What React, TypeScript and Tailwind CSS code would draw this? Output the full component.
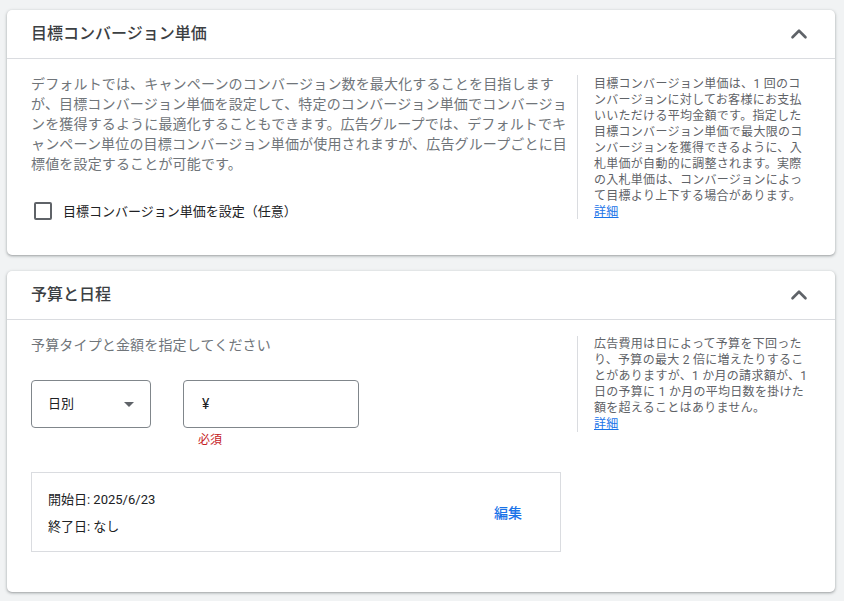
import { ChevronUp } from 'lucide-react'
import type { ReactNode } from 'react'

const font = 'font-[Roboto,"Noto_Sans_CJK_JP",sans-serif]'

function Card({ title, className, children }: { title: string; className: string; children: ReactNode }) {
  return (
    <section className={`bg-white rounded-[5px] shadow-[0_1px_2px_rgba(60,64,67,0.3),0_1px_3px_1px_rgba(60,64,67,0.15)] ${className}`}>
      <header className="h-[49px] pl-6 pr-[23px] flex items-center justify-between border-b border-[#dadce0]">
        <h2 className="text-[16px] leading-6 font-medium text-[#3c4043]">{title}</h2>
        <ChevronUp size={26} strokeWidth={2.4} className="text-[#5f6368]" aria-hidden="true" />
      </header>
      {children}
    </section>
  )
}

function SideNote({ text, className }: { text: string; className: string }) {
  return (
    <aside className={`border-l border-[#dadce0] pl-4 w-[233px] text-[12px] leading-4 text-[#5f6368] tracking-[0.28px] ${className}`}>
      <p>{text}</p>
      <a href="#" className="text-[#1a73e8] underline">詳細</a>
    </aside>
  )
}

export default function App() {
  return (
    <div className={`${font} w-[844px] h-[601px] overflow-hidden bg-[#f1f3f4] pt-[10px] pl-[7px] pr-[9px]`}>
      <Card title="目標コンバージョン単価" className="h-[245px] mb-4">
        <div className="flex pl-6 pt-[15px]">
          <div className="w-[546px] shrink-0">
            <p className="text-[14px] leading-5 text-[#70757a] tracking-[0.16px]">
              デフォルトでは、キャンペーンのコンバージョン数を最大化することを目指しますが、目標コンバージョン単価を設定して、特定のコンバージョン単価でコンバージョンを獲得するように最適化することもできます。広告グループでは、デフォルトでキャンペーン単位の目標コンバージョン単価が使用されますが、広告グループごとに目標値を設定することが可能です。
            </p>
            <label className="flex items-center mt-[27px] pl-[3px] gap-[11px] h-5">
              <span className="w-[18px] h-[18px] rounded-[2px] border-2 border-[#5f6368]" />
              <span className="text-[13px] leading-5 pt-px text-[#202124]">目標コンバージョン単価を設定（任意）</span>
            </label>
          </div>
          <SideNote
            className="h-[144px] mt-px pt-px"
            text="目標コンバージョン単価は、1 回のコンバージョンに対してお客様にお支払いいただける平均金額です。指定した目標コンバージョン単価で最大限のコンバージョンを獲得できるように、入札単価が自動的に調整されます。実際の入札単価は、コンバージョンによって目標より上下する場合があります。"
          />
        </div>
      </Card>
      <Card title="予算と日程" className="h-[321px]">
        <div className="flex pl-6 pt-[15px]">
          <div className="w-[546px] shrink-0">
            <p className="text-[14px] leading-5 text-[#70757a] tracking-[0.16px]">予算タイプと金額を指定してください</p>
            <div className="flex mt-[25px] gap-8">
              <div className="w-[120px] h-12 rounded border border-[#80868b] flex items-center justify-between pl-4 pr-4">
                <span className="text-[13px] text-[#202124]">日別</span>
                <span className="w-0 h-0 border-x-[5px] border-x-transparent border-t-[5px] border-t-[#5f6368]" />
              </div>
              <div>
                <div className="w-[176px] h-12 rounded border border-[#80868b] flex items-center pl-[18px] text-[14px] text-[#202124]">¥</div>
                <p className="text-[12px] leading-4 text-[#c5221f] pl-[15px] mt-[4px]">必須</p>
              </div>
            </div>
            <div className="w-[530px] h-20 mt-[24px] pt-[2px] border border-[#dadce0] flex items-center justify-between pl-4 pr-[38px]">
              <div className="text-[13px] leading-[27px] text-[#202124]">
                <p>開始日: 2025/6/23</p>
                <p>終了日: なし</p>
              </div>
              <button className="text-[14px] font-medium text-[#1a73e8]">編集</button>
            </div>
          </div>
          <SideNote
            className="h-24 mt-px"
            text="広告費用は日によって予算を下回ったり、予算の最大 2 倍に増えたりすることがありますが、1 か月の請求額が、1 日の予算に 1 か月の平均日数を掛けた額を超えることはありません。"
          />
        </div>
      </Card>
    </div>
  )
}
